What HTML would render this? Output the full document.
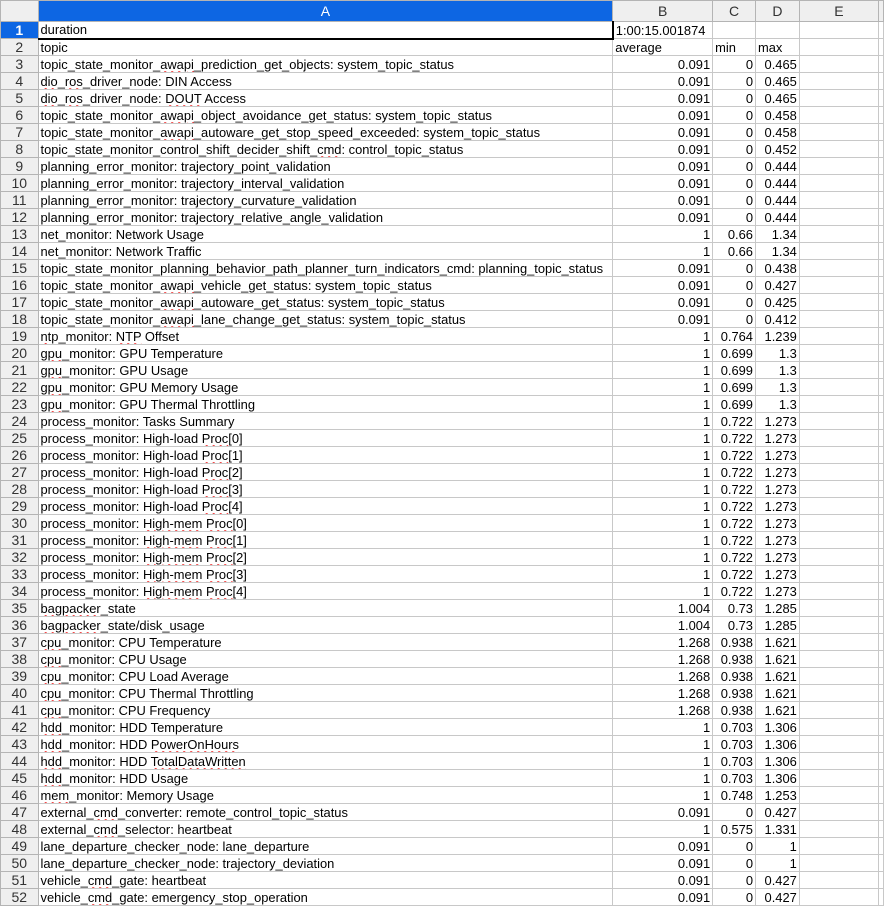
<!DOCTYPE html>
<html><head><meta charset="utf-8"><style>
*{margin:0;padding:0;box-sizing:border-box}
body{width:884px;height:904px;overflow:hidden;background:#fff;font-family:"Liberation Sans",sans-serif;font-size:12.9px;color:#000}
table{border-collapse:collapse;table-layout:fixed;position:absolute;left:0;top:0}
td{height:17px;border:1px solid #c8c8c8;padding:0 2px;white-space:nowrap;overflow:hidden;line-height:15px}
td.h{background:#efefef;color:#333;text-align:center;border-color:#b4b4b4;font-size:14px}
tr.hd td{height:21px;background:#efefef;color:#333;text-align:center;border-color:#b4b4b4;font-size:14px}
td.sel{background:#0d66e3;color:#fff;font-weight:bold}
tr.hd td.sel{background:#0d66e3;color:#fff;font-weight:normal}
td.r{text-align:right}
td.a1{border:1px solid #c8c8c8;border-bottom:2px solid #000;border-right:2px solid #000}
.s{text-decoration:underline wavy #e00;text-decoration-thickness:1px;text-underline-offset:2px}
</style></head><body>
<table>
<colgroup><col style="width:38px"><col style="width:575px"><col style="width:100px"><col style="width:43px"><col style="width:44px"><col style="width:81px"><col style="width:3px"></colgroup>
<tr class="hd"><td></td><td class="sel">A</td><td>B</td><td>C</td><td>D</td><td>E</td><td></td></tr>
<tr><td class="h sel">1</td><td class="a1">duration</td><td>1:00:15.001874</td><td></td><td></td><td></td><td></td></tr>
<tr><td class="h">2</td><td>topic</td><td>average</td><td>min</td><td>max</td><td></td><td></td></tr>
<tr><td class="h">3</td><td>topic_state_monitor_<span class="s">awapi</span>_prediction_get_objects: system_topic_status</td><td class="r">0.091</td><td class="r">0</td><td class="r">0.465</td><td></td><td></td></tr>
<tr><td class="h">4</td><td><span class="s">dio</span>_<span class="s">ros</span>_driver_node: DIN Access</td><td class="r">0.091</td><td class="r">0</td><td class="r">0.465</td><td></td><td></td></tr>
<tr><td class="h">5</td><td><span class="s">dio</span>_<span class="s">ros</span>_driver_node: <span class="s">DOUT</span> Access</td><td class="r">0.091</td><td class="r">0</td><td class="r">0.465</td><td></td><td></td></tr>
<tr><td class="h">6</td><td>topic_state_monitor_<span class="s">awapi</span>_object_avoidance_get_status: system_topic_status</td><td class="r">0.091</td><td class="r">0</td><td class="r">0.458</td><td></td><td></td></tr>
<tr><td class="h">7</td><td>topic_state_monitor_<span class="s">awapi</span>_autoware_get_stop_speed_exceeded: system_topic_status</td><td class="r">0.091</td><td class="r">0</td><td class="r">0.458</td><td></td><td></td></tr>
<tr><td class="h">8</td><td>topic_state_monitor_control_shift_decider_shift_<span class="s">cmd</span>: control_topic_status</td><td class="r">0.091</td><td class="r">0</td><td class="r">0.452</td><td></td><td></td></tr>
<tr><td class="h">9</td><td>planning_error_monitor: trajectory_point_validation</td><td class="r">0.091</td><td class="r">0</td><td class="r">0.444</td><td></td><td></td></tr>
<tr><td class="h">10</td><td>planning_error_monitor: trajectory_interval_validation</td><td class="r">0.091</td><td class="r">0</td><td class="r">0.444</td><td></td><td></td></tr>
<tr><td class="h">11</td><td>planning_error_monitor: trajectory_curvature_validation</td><td class="r">0.091</td><td class="r">0</td><td class="r">0.444</td><td></td><td></td></tr>
<tr><td class="h">12</td><td>planning_error_monitor: trajectory_relative_angle_validation</td><td class="r">0.091</td><td class="r">0</td><td class="r">0.444</td><td></td><td></td></tr>
<tr><td class="h">13</td><td>net_monitor: Network Usage</td><td class="r">1</td><td class="r">0.66</td><td class="r">1.34</td><td></td><td></td></tr>
<tr><td class="h">14</td><td>net_monitor: Network Traffic</td><td class="r">1</td><td class="r">0.66</td><td class="r">1.34</td><td></td><td></td></tr>
<tr><td class="h">15</td><td>topic_state_monitor_planning_behavior_path_planner_turn_indicators_cmd: planning_topic_status</td><td class="r">0.091</td><td class="r">0</td><td class="r">0.438</td><td></td><td></td></tr>
<tr><td class="h">16</td><td>topic_state_monitor_<span class="s">awapi</span>_vehicle_get_status: system_topic_status</td><td class="r">0.091</td><td class="r">0</td><td class="r">0.427</td><td></td><td></td></tr>
<tr><td class="h">17</td><td>topic_state_monitor_<span class="s">awapi</span>_autoware_get_status: system_topic_status</td><td class="r">0.091</td><td class="r">0</td><td class="r">0.425</td><td></td><td></td></tr>
<tr><td class="h">18</td><td>topic_state_monitor_<span class="s">awapi</span>_lane_change_get_status: system_topic_status</td><td class="r">0.091</td><td class="r">0</td><td class="r">0.412</td><td></td><td></td></tr>
<tr><td class="h">19</td><td><span class="s">ntp</span>_monitor: <span class="s">NTP</span> Offset</td><td class="r">1</td><td class="r">0.764</td><td class="r">1.239</td><td></td><td></td></tr>
<tr><td class="h">20</td><td><span class="s">gpu</span>_monitor: GPU Temperature</td><td class="r">1</td><td class="r">0.699</td><td class="r">1.3</td><td></td><td></td></tr>
<tr><td class="h">21</td><td><span class="s">gpu</span>_monitor: GPU Usage</td><td class="r">1</td><td class="r">0.699</td><td class="r">1.3</td><td></td><td></td></tr>
<tr><td class="h">22</td><td><span class="s">gpu</span>_monitor: GPU Memory Usage</td><td class="r">1</td><td class="r">0.699</td><td class="r">1.3</td><td></td><td></td></tr>
<tr><td class="h">23</td><td><span class="s">gpu</span>_monitor: GPU Thermal Throttling</td><td class="r">1</td><td class="r">0.699</td><td class="r">1.3</td><td></td><td></td></tr>
<tr><td class="h">24</td><td>process_monitor: Tasks Summary</td><td class="r">1</td><td class="r">0.722</td><td class="r">1.273</td><td></td><td></td></tr>
<tr><td class="h">25</td><td>process_monitor: High-load <span class="s">Proc</span>[0]</td><td class="r">1</td><td class="r">0.722</td><td class="r">1.273</td><td></td><td></td></tr>
<tr><td class="h">26</td><td>process_monitor: High-load <span class="s">Proc</span>[1]</td><td class="r">1</td><td class="r">0.722</td><td class="r">1.273</td><td></td><td></td></tr>
<tr><td class="h">27</td><td>process_monitor: High-load <span class="s">Proc</span>[2]</td><td class="r">1</td><td class="r">0.722</td><td class="r">1.273</td><td></td><td></td></tr>
<tr><td class="h">28</td><td>process_monitor: High-load <span class="s">Proc</span>[3]</td><td class="r">1</td><td class="r">0.722</td><td class="r">1.273</td><td></td><td></td></tr>
<tr><td class="h">29</td><td>process_monitor: High-load <span class="s">Proc</span>[4]</td><td class="r">1</td><td class="r">0.722</td><td class="r">1.273</td><td></td><td></td></tr>
<tr><td class="h">30</td><td>process_monitor: <span class="s">High-mem</span> <span class="s">Proc</span>[0]</td><td class="r">1</td><td class="r">0.722</td><td class="r">1.273</td><td></td><td></td></tr>
<tr><td class="h">31</td><td>process_monitor: <span class="s">High-mem</span> <span class="s">Proc</span>[1]</td><td class="r">1</td><td class="r">0.722</td><td class="r">1.273</td><td></td><td></td></tr>
<tr><td class="h">32</td><td>process_monitor: <span class="s">High-mem</span> <span class="s">Proc</span>[2]</td><td class="r">1</td><td class="r">0.722</td><td class="r">1.273</td><td></td><td></td></tr>
<tr><td class="h">33</td><td>process_monitor: <span class="s">High-mem</span> <span class="s">Proc</span>[3]</td><td class="r">1</td><td class="r">0.722</td><td class="r">1.273</td><td></td><td></td></tr>
<tr><td class="h">34</td><td>process_monitor: <span class="s">High-mem</span> <span class="s">Proc</span>[4]</td><td class="r">1</td><td class="r">0.722</td><td class="r">1.273</td><td></td><td></td></tr>
<tr><td class="h">35</td><td><span class="s">bagpacker</span>_state</td><td class="r">1.004</td><td class="r">0.73</td><td class="r">1.285</td><td></td><td></td></tr>
<tr><td class="h">36</td><td><span class="s">bagpacker</span>_state/disk_usage</td><td class="r">1.004</td><td class="r">0.73</td><td class="r">1.285</td><td></td><td></td></tr>
<tr><td class="h">37</td><td><span class="s">cpu</span>_monitor: CPU Temperature</td><td class="r">1.268</td><td class="r">0.938</td><td class="r">1.621</td><td></td><td></td></tr>
<tr><td class="h">38</td><td><span class="s">cpu</span>_monitor: CPU Usage</td><td class="r">1.268</td><td class="r">0.938</td><td class="r">1.621</td><td></td><td></td></tr>
<tr><td class="h">39</td><td><span class="s">cpu</span>_monitor: CPU Load Average</td><td class="r">1.268</td><td class="r">0.938</td><td class="r">1.621</td><td></td><td></td></tr>
<tr><td class="h">40</td><td><span class="s">cpu</span>_monitor: CPU Thermal Throttling</td><td class="r">1.268</td><td class="r">0.938</td><td class="r">1.621</td><td></td><td></td></tr>
<tr><td class="h">41</td><td><span class="s">cpu</span>_monitor: CPU Frequency</td><td class="r">1.268</td><td class="r">0.938</td><td class="r">1.621</td><td></td><td></td></tr>
<tr><td class="h">42</td><td><span class="s">hdd</span>_monitor: HDD Temperature</td><td class="r">1</td><td class="r">0.703</td><td class="r">1.306</td><td></td><td></td></tr>
<tr><td class="h">43</td><td><span class="s">hdd</span>_monitor: HDD <span class="s">PowerOnHours</span></td><td class="r">1</td><td class="r">0.703</td><td class="r">1.306</td><td></td><td></td></tr>
<tr><td class="h">44</td><td><span class="s">hdd</span>_monitor: HDD <span class="s">TotalDataWritten</span></td><td class="r">1</td><td class="r">0.703</td><td class="r">1.306</td><td></td><td></td></tr>
<tr><td class="h">45</td><td><span class="s">hdd</span>_monitor: HDD Usage</td><td class="r">1</td><td class="r">0.703</td><td class="r">1.306</td><td></td><td></td></tr>
<tr><td class="h">46</td><td><span class="s">mem</span>_monitor: Memory Usage</td><td class="r">1</td><td class="r">0.748</td><td class="r">1.253</td><td></td><td></td></tr>
<tr><td class="h">47</td><td>external_<span class="s">cmd</span>_converter: remote_control_topic_status</td><td class="r">0.091</td><td class="r">0</td><td class="r">0.427</td><td></td><td></td></tr>
<tr><td class="h">48</td><td>external_<span class="s">cmd</span>_selector: heartbeat</td><td class="r">1</td><td class="r">0.575</td><td class="r">1.331</td><td></td><td></td></tr>
<tr><td class="h">49</td><td>lane_departure_checker_node: lane_departure</td><td class="r">0.091</td><td class="r">0</td><td class="r">1</td><td></td><td></td></tr>
<tr><td class="h">50</td><td>lane_departure_checker_node: trajectory_deviation</td><td class="r">0.091</td><td class="r">0</td><td class="r">1</td><td></td><td></td></tr>
<tr><td class="h">51</td><td>vehicle_<span class="s">cmd</span>_gate: heartbeat</td><td class="r">0.091</td><td class="r">0</td><td class="r">0.427</td><td></td><td></td></tr>
<tr><td class="h">52</td><td>vehicle_<span class="s">cmd</span>_gate: emergency_stop_operation</td><td class="r">0.091</td><td class="r">0</td><td class="r">0.427</td><td></td><td></td></tr>
</table>
</body></html>
